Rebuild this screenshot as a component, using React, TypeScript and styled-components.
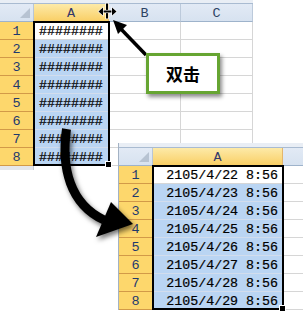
import React from 'react';
import styled, { createGlobalStyle } from 'styled-components';

const GlobalStyle = createGlobalStyle`
  html, body {
    margin: 0;
    padding: 0;
    background: #fff;
    overflow: hidden;
  }
`;

const Canvas = styled.div`
  position: relative;
  width: 303px;
  height: 313px;
  overflow: hidden;
  background: #fff;
  font-family: 'Liberation Mono', 'DejaVu Sans Mono', monospace;
`;

const SheetWrap = styled.div<{ $left: number; $top: number; $width: number; $edge?: boolean }>`
  position: absolute;
  left: ${({ $left }) => $left}px;
  top: ${({ $top }) => $top}px;
  width: ${({ $width }) => $width}px;
  background: #fff;
  box-shadow: ${({ $edge }) => ($edge ? '-1px 0 0 #a3b2c4' : 'none')};
`;

const TopStrip = styled.div<{ $h: number }>`
  height: ${({ $h }) => $h}px;
  background: #e9eef5;
  border-bottom: 1px solid #a9bbd1;
`;

const Grid = styled.div<{ $cols: string }>`
  position: relative;
  display: grid;
  grid-template-columns: ${({ $cols }) => $cols};
  grid-auto-rows: 18px;
`;

const Corner = styled.div`
  box-sizing: border-box;
  position: relative;
  background: linear-gradient(#e2eaf5, #d7e2f0);
  border-right: 1px solid #b9c6d6;
  border-bottom: 1px solid #9eb3cb;

  &::after {
    content: '';
    position: absolute;
    right: 3px;
    bottom: 3px;
    width: 0;
    height: 0;
    border-left: 10px solid transparent;
    border-bottom: 10px solid #b7c3d2;
  }
`;

const ColHead = styled.div<{ $selected?: boolean }>`
  box-sizing: border-box;
  display: flex;
  align-items: center;
  justify-content: center;
  padding-top: 1px;
  font-size: 13.5px;
  color: ${({ $selected }) => ($selected ? '#34386a' : '#2d4263')};
  background: ${({ $selected }) =>
    $selected ? 'linear-gradient(#fdeaa8, #f9cf66)' : 'linear-gradient(#e2eaf5, #d7e2f0)'};
  border-right: 1px solid ${({ $selected }) => ($selected ? '#e4b66c' : '#bccadb')};
  border-bottom: 1px solid ${({ $selected }) => ($selected ? '#e0a23e' : '#9eb3cb')};
`;

const RowHead = styled.div`
  box-sizing: border-box;
  display: flex;
  align-items: center;
  justify-content: center;
  padding-top: 1px;
  font-size: 13.5px;
  color: #1f3a6e;
  background: #fdd76c;
  border-right: 1px solid #c9923f;
  border-bottom: 1px solid #d29a48;
`;

const FootStrip = styled.div`
  grid-column: 1 / 2;
  height: 4px;
  background: #e4e7ec;
  border-right: 1px solid #c6ccd4;
`;

const Cell = styled.div<{ $selected?: boolean; $right?: boolean }>`
  box-sizing: border-box;
  display: flex;
  align-items: center;
  justify-content: ${({ $right }) => ($right ? 'flex-end' : 'flex-start')};
  padding: 2px 4px 0 5px;
  font-size: 13.3px;
  color: #000;
  white-space: nowrap;
  overflow: hidden;
  -webkit-text-stroke: 0.2px #000;
  background: ${({ $selected }) => ($selected ? '#bad5f3' : '#fff')};
  border-right: 1px solid #d6d6d6;
  border-bottom: 1px solid ${({ $selected }) => ($selected ? '#d2dded' : '#d6d6d6')};
`;

const Selection = styled.div<{ $left: number; $width: number }>`
  position: absolute;
  box-sizing: border-box;
  left: ${({ $left }) => $left}px;
  top: 17px;
  width: ${({ $width }) => $width}px;
  height: 145px;
  border: 2px solid #000;
  pointer-events: none;

  &::after {
    content: '';
    position: absolute;
    right: -4px;
    bottom: -4px;
    width: 5px;
    height: 5px;
    background: #000;
    border: 1px solid #fff;
  }
`;

const Callout = styled.div`
  position: absolute;
  left: 146px;
  top: 53px;
  width: 74px;
  height: 41px;
  box-sizing: border-box;
  display: flex;
  align-items: center;
  justify-content: center;
  background: #fff;
  border: 3px solid #66a532;
  box-shadow: 2px 3px 4px rgba(0, 0, 0, 0.45);
  font-family: 'Noto Sans CJK SC', 'Noto Sans', sans-serif;
  font-weight: 700;
  font-size: 17px;
  color: #000;
`;

const Overlay = styled.svg`
  position: absolute;
  left: 0;
  top: 0;
  width: 303px;
  height: 313px;
  pointer-events: none;
`;

type Col = { label: string; width: number };

interface SheetProps {
  left: number;
  top: number;
  strip: number;
  cols: Col[];
  values: string[];
  right?: boolean;
  foot?: boolean;
  edge?: boolean;
}

const Sheet: React.FC<SheetProps> = ({ left, top, strip, cols, values, right, foot, edge }) => {
  const template = ['34px', ...cols.map((c) => `${c.width}px`)].join(' ');
  const width = 34 + cols.reduce((s, c) => s + c.width, 0);
  return (
    <SheetWrap $left={left} $top={top} $width={width} $edge={edge}>
      <TopStrip $h={strip} />
      <Grid $cols={template}>
        <Corner />
        {cols.map((c, i) => (
          <ColHead key={i} $selected={i === 0}>
            {c.label}
          </ColHead>
        ))}
        {values.map((v, r) => (
          <React.Fragment key={r}>
            <RowHead>{r + 1}</RowHead>
            <Cell $selected={r > 0} $right={right}>
              {v}
            </Cell>
            {cols.slice(1).map((_, i) => (
              <Cell key={i} />
            ))}
          </React.Fragment>
        ))}
        {foot && <FootStrip />}
        <Selection $left={33} $width={cols[0].width + 2} />
      </Grid>
    </SheetWrap>
  );
};

const hashes = Array.from({ length: 8 }, () => '########');
const dates = Array.from({ length: 8 }, (_, i) => `2105/4/${22 + i} 8:56`);

const App: React.FC = () => (
  <Canvas>
    <GlobalStyle />
    <Sheet
      left={0}
      top={0}
      strip={3}
      cols={[
        { label: 'A', width: 75 },
        { label: 'B', width: 72 },
        { label: 'C', width: 72 },
      ]}
      values={hashes}
      foot
    />
    {/* column B of the lower sheet runs past the picture's edge, so its letter is not shown */}
    <Sheet
      left={119}
      top={143}
      strip={4}
      cols={[
        { label: 'A', width: 130 },
        { label: '', width: 72 },
      ]}
      values={dates}
      right
      edge
    />
    <Overlay viewBox="0 0 303 313">
      <defs>
        <filter id="soft" x="-30%" y="-30%" width="160%" height="160%">
          <feDropShadow dx="2" dy="3" stdDeviation="2.5" floodColor="#000" floodOpacity="0.55" />
        </filter>
      </defs>
      {/* column resize cursor */}
      <g stroke="#fff" strokeWidth="1.2" paintOrder="stroke" fill="#000">
        <rect x="106" y="3.5" width="2" height="15" />
        <rect x="101" y="10.5" width="12" height="2" />
        <polygon points="98.5,11.5 103,7.5 103,15.5" />
        <polygon points="116.5,11.5 112,7.5 112,15.5" />
      </g>
      {/* pointer to the cursor */}
      <line x1="146" y1="55" x2="120" y2="28" stroke="#000" strokeWidth="3.5" />
      <polygon points="113,20 127,25 118,34" fill="#000" />
      {/* curved arrow */}
      <g filter="url(#soft)">
        <path d="M66.5,129 C61,168 70,204 104,220" stroke="#000" strokeWidth="9" fill="none" />
        <polygon points="111,202 133,224 96,237" fill="#000" />
      </g>
    </Overlay>
    <Callout>双击</Callout>
  </Canvas>
);

export default App;
